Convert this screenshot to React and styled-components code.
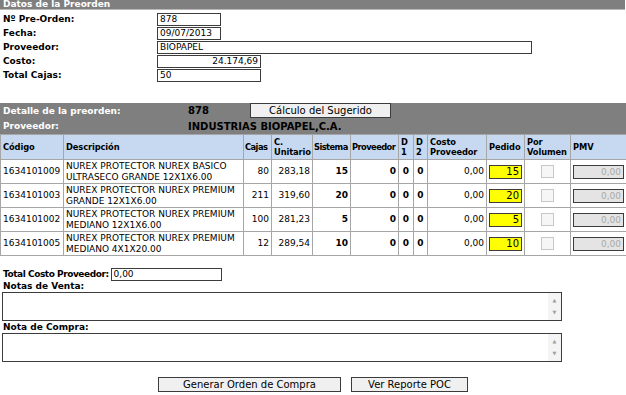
import React from 'react';
import styled, { createGlobalStyle } from 'styled-components';

const GlobalStyle = createGlobalStyle`
  html, body {
    margin: 0;
    padding: 0;
    background: #ffffff;
  }
  body {
    font-family: "DejaVu Sans", Verdana, sans-serif;
    font-size: 9px;
    color: #000;
  }
`;

const Page = styled.div`
  width: 626px;
  height: 395px;
  overflow: hidden;
  display: flex;
  flex-direction: column;
`;

const SectionBar = styled.div`
  height: 9px;
  line-height: 9px;
  background: #7f7f7f;
  border-bottom: 1px solid #b8b8b8;
  color: #fff;
  font-weight: bold;
  padding-left: 3px;
  width: 622px;
`;

const FormGrid = styled.div`
  display: grid;
  grid-template-columns: 154px auto;
  grid-auto-rows: 14px;
  align-items: center;
  padding: 2px 0 0 3px;
`;

const Label = styled.span`
  font-weight: bold;
  letter-spacing: ${p => (p.$tight ? '-0.45px' : 'normal')};
`;

const Field = styled.div`
  box-sizing: border-box;
  width: ${p => p.$w}px;
  height: ${p => p.$h || 13}px;
  border: 1px solid #3c3c3c;
  background: ${p => p.$bg || '#fff'};
  color: ${p => p.$color || '#000'};
  text-align: ${p => (p.$right ? 'right' : 'left')};
  padding: 0 2px;
  line-height: ${p => (p.$h || 13) - 2}px;
  font-size: 9px;
  white-space: nowrap;
`;

const Detail = styled.div`
  margin-top: 21px;
  background: #7f7f7f;
  width: 626px;
  display: grid;
  grid-template-columns: 188px 62px auto;
  grid-template-rows: 15px 16px;
  align-items: center;
`;

const DetailLabel = styled.span`
  color: #fff;
  font-weight: bold;
  padding-left: 3px;
`;

const DetailValue = styled.span`
  color: #000;
  font-weight: bold;
  font-size: 10px;
  grid-column: ${p => p.$span ? '2 / 4' : 'auto'};
`;

const Button = styled.button`
  box-sizing: border-box;
  width: ${p => p.$w}px;
  height: ${p => p.$h || 15}px;
  border: 1px solid #3c3c3c;
  background: #f0f0f0;
  font-family: "DejaVu Sans", Verdana, sans-serif;
  font-size: 10px;
  color: #000;
  padding: 0;
  cursor: pointer;
`;

const Table = styled.table`
  border-collapse: collapse;
  width: 626px;
  table-layout: fixed;
`;

const Th = styled.th`
  background: #c6d9f1;
  border: 1px solid #a6a6a6;
  text-align: left;
  font-weight: bold;
  font-size: 8.3px;
  letter-spacing: ${p => (p.$tight ? '-0.55px' : '-0.1px')};
  height: 24px;
  padding: ${p => (p.$tight ? '0 1px' : '0 2px')};
  line-height: 10px;
  vertical-align: middle;
  overflow: hidden;
  white-space: nowrap;
`;

const Td = styled.td`
  border: 1px solid #a6a6a6;
  height: 23px;
  padding: 0 2px;
  font-size: 9px;
  line-height: 11px;
  text-align: ${p => p.$align || 'left'};
  font-weight: ${p => (p.$bold ? 'bold' : 'normal')};
  vertical-align: middle;
`;

const CheckBox = styled.span`
  display: inline-block;
  width: 11px;
  height: 11px;
  border: 1px solid #c8c8c8;
  background: #f6f6f6;
  vertical-align: middle;
`;

const Footer = styled.div`
  display: flex;
  flex-direction: column;
  padding: 11px 0 0 3px;
`;

const InlineRow = styled.div`
  display: flex;
  align-items: center;
  gap: 2px;
  height: 14px;
`;

const NoteLabel = styled.div`
  font-weight: bold;
  height: 11px;
  line-height: 11px;
  margin-top: ${p => p.$mt || 0}px;
`;

const NoteBox = styled.div`
  box-sizing: border-box;
  margin-left: -1px;
  width: 560px;
  height: 29px;
  border: 1px solid #3c3c3c;
  display: flex;
  background: #fff;
`;

const NoteArea = styled.textarea`
  flex: 1;
  border: none;
  resize: none;
  outline: none;
  font-family: "DejaVu Sans", Verdana, sans-serif;
  font-size: 9px;
  padding: 1px 2px;
`;

const ScrollSide = styled.div`
  width: 13px;
  background: #f4f4f4;
  display: flex;
  flex-direction: column;
  justify-content: space-between;
  align-items: center;
  padding: 5px 0;
  color: #a0a0a0;
  font-size: 5px;
  line-height: 5px;
`;

const Actions = styled.div`
  display: flex;
  justify-content: center;
  gap: 10px;
  margin-top: 15px;
  width: 626px;
  margin-left: -3px;
`;

const rows = [
  { code: '1634101009', desc: 'NUREX PROTECTOR NUREX BASICO ULTRASECO GRANDE 12X1X6.00', cajas: 80, unit: '283,18', sis: 15, ped: 15 },
  { code: '1634101003', desc: 'NUREX PROTECTOR NUREX PREMIUM GRANDE 12X1X6.00', cajas: 211, unit: '319,60', sis: 20, ped: 20 },
  { code: '1634101002', desc: 'NUREX PROTECTOR NUREX PREMIUM MEDIANO 12X1X6.00', cajas: 100, unit: '281,23', sis: 5, ped: 5 },
  { code: '1634101005', desc: 'NUREX PROTECTOR NUREX PREMIUM MEDIANO 4X1X20.00', cajas: 12, unit: '289,54', sis: 10, ped: 10 },
];

const cols = [63, 180, 28, 41, 38, 48, 15, 14, 59, 38, 46, 56];

const Note = () => (
  <NoteBox>
    <NoteArea />
    <ScrollSide>
      <span>▲</span>
      <span>▼</span>
    </ScrollSide>
  </NoteBox>
);

const App = () => (
  <Page>
    <GlobalStyle />
    <SectionBar>Datos de la Preorden</SectionBar>
    <FormGrid>
      <Label>Nº Pre-Orden:</Label>
      <Field $w={64}>878</Field>
      <Label>Fecha:</Label>
      <Field $w={64}>09/07/2013</Field>
      <Label>Proveedor:</Label>
      <Field $w={375}>BIOPAPEL</Field>
      <Label>Costo:</Label>
      <Field $w={104} $right>24.174,69</Field>
      <Label>Total Cajas:</Label>
      <Field $w={104}>50</Field>
    </FormGrid>

    <Detail>
      <DetailLabel>Detalle de la preorden:</DetailLabel>
      <DetailValue>878</DetailValue>
      <Button $w={141}>Cálculo del Sugerido</Button>
      <DetailLabel>Proveedor:</DetailLabel>
      <DetailValue $span>INDUSTRIAS BIOPAPEL,C.A.</DetailValue>
    </Detail>

    <Table>
      <colgroup>
        {cols.map((w, i) => <col key={i} style={{ width: w }} />)}
      </colgroup>
      <thead>
        <tr>
          <Th>Código</Th>
          <Th>Descripción</Th>
          <Th $tight>Cajas</Th>
          <Th>C.<br />Unitario</Th>
          <Th $tight>Sistema</Th>
          <Th $tight>Proveedor</Th>
          <Th>D<br />1</Th>
          <Th>D<br />2</Th>
          <Th>Costo<br />Proveedor</Th>
          <Th>Pedido</Th>
          <Th>Por<br />Volumen</Th>
          <Th>PMV</Th>
        </tr>
      </thead>
      <tbody>
        {rows.map(r => (
          <tr key={r.code}>
            <Td>{r.code}</Td>
            <Td>{r.desc}</Td>
            <Td $align="right">{r.cajas}</Td>
            <Td $align="right">{r.unit}</Td>
            <Td $bold $align="right">{r.sis}</Td>
            <Td $bold $align="right">0</Td>
            <Td $bold $align="center">0</Td>
            <Td $bold $align="center">0</Td>
            <Td $align="right">0,00</Td>
            <Td $align="center">
              <Field $w={33} $h={14} $bg="#ffff00" $right style={{ display: 'inline-block', fontSize: 10 }}>{r.ped}</Field>
            </Td>
            <Td $align="center"><CheckBox /></Td>
            <Td $align="right">
              <Field $w={51} $h={14} $bg="#e4e4e4" $color="#a8a8a8" $right style={{ display: 'inline-block' }}>0,00</Field>
            </Td>
          </tr>
        ))}
      </tbody>
    </Table>

    <Footer>
      <InlineRow>
        <Label $tight>Total Costo Proveedor:</Label>
        <Field $w={111}>0,00</Field>
      </InlineRow>
      <NoteLabel>Notas de Venta:</NoteLabel>
      <Note />
      <NoteLabel $mt={1}>Nota de Compra:</NoteLabel>
      <Note />
      <Actions>
        <Button $w={183}>Generar Orden de Compra</Button>
        <Button $w={117}>Ver Reporte POC</Button>
      </Actions>
    </Footer>
  </Page>
);

export default App;
